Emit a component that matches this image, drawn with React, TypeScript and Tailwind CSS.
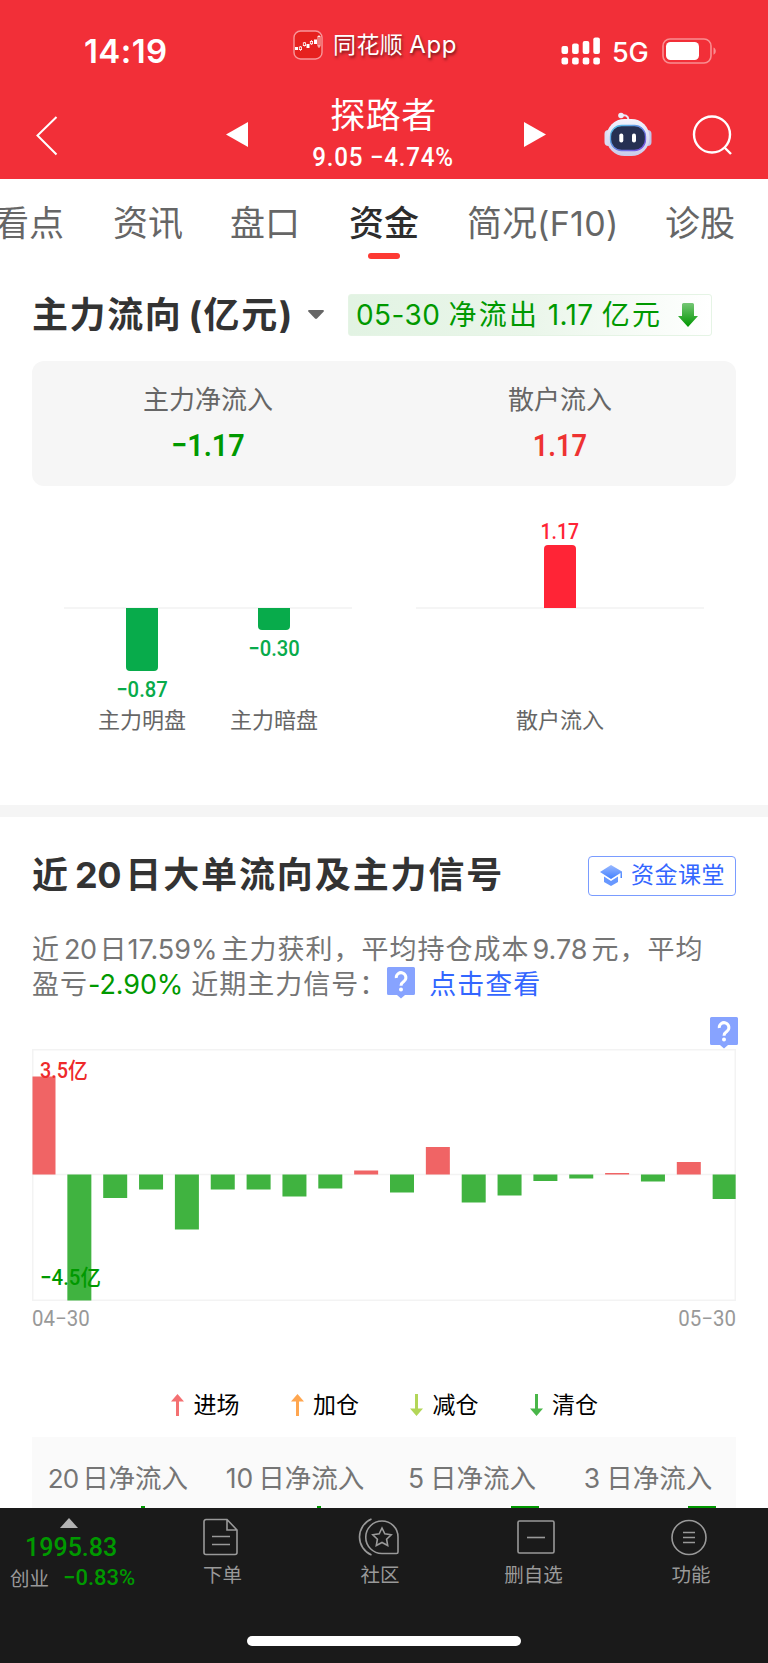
import React from "react";

const din = "font-['Roboto','Noto_Sans_CJK_SC',sans-serif]";

function QuestionBadge() {
  return (
    <svg width="28" height="32" viewBox="0 0 28 32" className="block shrink-0">
      <path d="M1.5 0h25a1.5 1.5 0 0 1 1.5 1.5v25a1.5 1.5 0 0 1-1.5 1.5H18l-4 3.4L10 28H1.5A1.5 1.5 0 0 1 0 26.500v-25A1.500 1.500 0 0 1 1.500 0z" fill="#87a3ff" />
      <path d="M9.300 11a4.800 4.800 0 1 1 7.800 3.200c-1.800 1.300-3.100 2-3.100 4.500" fill="none" stroke="#fff" strokeWidth="3" />
      <circle cx="14" cy="22.500" r="2" fill="#fff" />
    </svg>
  );
}

function StatusBar() {
  const signal = [8, 10.500, 13, 16.500];
  return (
    <div className="flex h-[90px] items-start">
      <div className="w-[293px] pl-[84px] pt-[34px] text-[33px] font-semibold leading-[34px] tracking-[0.400px]">14:19</div>
      <svg width="30" height="30" viewBox="0 0 30 30" className="mt-[30px]">
        <rect x="1" y="1" width="28" height="28" rx="6.500" fill="#e6211f" stroke="#f8979a" strokeWidth="1.400" />
        <g fill="#fff">
          <rect x="2" y="17" width="3" height="3" />
          <rect x="13.500" y="14" width="3" height="4" />
          <rect x="21" y="9.500" width="3" height="4.500" />
        </g>
        <path d="M7.500 16v5M11.500 12v4.500M18.500 10v5M26 5v13" stroke="#fff" strokeWidth=".7" />
        <g fill="#e6211f" stroke="#fff" strokeWidth=".8">
          <rect x="6.300" y="17" width="2.300" height="2.600" />
          <rect x="10.300" y="12.800" width="2.300" height="2.800" />
          <rect x="17.300" y="11.500" width="2.300" height="2.300" />
          <rect x="25" y="6.500" width="2" height="9.500" />
        </g>
      </svg>
      <div className="ml-[10px] mt-[30px] w-[228px] whitespace-nowrap text-[23px] leading-[30px] tracking-[0.4px] [text-shadow:1px_2px_3px_rgba(0,0,0,.55)]">
        同花顺<span className="ml-[6px] text-[24px] tracking-[0.700px]">App</span>
      </div>
      <svg width="40" height="28" viewBox="0 0 40 28" className="mt-[37px]" fill="#fff">
        {signal.map((h, i) => (
          <g key={i}>
            <rect x={0.5 + i * 10.600} y={17 - h} width="6.600" height={h} rx="2" />
            <rect x={0.5 + i * 10.600} y="20.500" width="6.600" height="7" rx="2" />
          </g>
        ))}
      </svg>
      <div className="ml-[11px] mt-[38px] w-[50px] text-[27px] font-medium leading-[30px] tracking-[-0.3px]">5G</div>
      <svg width="56" height="28" viewBox="0 0 56 28" className="mt-[37px]">
        <rect x="1" y="2" width="48" height="24" rx="7" fill="none" stroke="#f98e91" strokeWidth="1.600" />
        <rect x="4" y="5" width="33" height="18" rx="4.500" fill="#fff" />
        <path d="M51.500 10.500c3 1.200 3 6 0 7.200z" fill="#f98e91" />
      </svg>
    </div>
  );
}

function Robot() {
  return (
    <svg width="50" height="46" viewBox="0 0 50 46">
      <defs>
        <linearGradient id="shell" x1="0" y1="0" x2="0" y2="1">
          <stop offset="0" stopColor="#f4f4fd" />
          <stop offset="1" stopColor="#c9cbea" />
        </linearGradient>
        <linearGradient id="rim" x1="0" y1="0" x2="1" y2="1">
          <stop offset="0" stopColor="#56c9e8" />
          <stop offset="1" stopColor="#7a48e0" />
        </linearGradient>
      </defs>
      <path d="M18 4.500c4-1 7 0 7.500 4" fill="none" stroke="#e9e7f8" strokeWidth="2" />
      <circle cx="18" cy="4.500" r="2.800" fill="#eeeefa" />
      <rect x="1.500" y="19" width="8" height="16" rx="4" fill="#dcdcf2" />
      <rect x="40.500" y="19" width="8" height="16" rx="4" fill="#c4c4e8" />
      <rect x="3.500" y="8" width="43" height="37" rx="18" fill="url(#shell)" />
      <rect x="7.500" y="14.500" width="35" height="25" rx="11" fill="#263052" stroke="url(#rim)" strokeWidth="1.300" />
      <rect x="16.300" y="22.500" width="4" height="9" rx="1.900" fill="#fff" />
      <rect x="29" y="22.500" width="4" height="9" rx="1.900" fill="#fff" />
    </svg>
  );
}

function TitleBar() {
  return (
    <div className="flex h-[89px] items-start">
      <svg width="22" height="40" viewBox="0 0 22 40" className="ml-[36px] mt-[26px]">
        <path d="M20.500 1 1.500 19.500 20.500 38.500" fill="none" stroke="#fff" strokeWidth="2" />
      </svg>
      <svg width="22" height="25" viewBox="0 0 22 25" className="ml-[168px] mt-[32px]"><path d="M22 0v25L0 12.500z" fill="#fff" /></svg>
      <div className="ml-[51px] w-[169px] text-center">
        <div className="mt-[6px] text-[35px] leading-[38px] tracking-[0.500px]">探路者</div>
        <div className={`${din} mt-[9px] flex justify-center whitespace-nowrap text-[26px] font-medium leading-[28px]`}>
          <span className="scale-x-[.93] tracking-[0.800px]">9.05 −4.74%</span>
        </div>
      </div>
      <svg width="22" height="25" viewBox="0 0 22 25" className="ml-[56px] mt-[32px]"><path d="M0 0v25l22-12.500z" fill="#fff" /></svg>
      <div className="ml-[57px] mt-[21px]"><Robot /></div>
      <svg width="42" height="42" viewBox="0 0 42 42" className="ml-[39px] mt-[25px]" fill="none" stroke="#fff" strokeWidth="2.400">
        <circle cx="20" cy="19.500" r="18" />
        <path d="m32.500 32.500 6.500 6.500" />
      </svg>
    </div>
  );
}

function Tabs() {
  return (
    <nav className="flex h-[84px] items-start overflow-hidden whitespace-nowrap pt-[22px] text-[35px] leading-[44px] text-[#666]">
      <span className="-ml-[6px] w-[119px] shrink-0">看点</span>
      <span className="w-[117px] shrink-0">资讯</span>
      <span className="w-[119px] shrink-0">盘口</span>
      <span className="flex w-[118px] shrink-0 flex-col font-medium text-[#2d2d2d]">
        资金
        <span className="ml-[19px] mt-[8px] h-[6px] w-[32px] rounded-full bg-[#fd3a33]" />
      </span>
      <span className="w-[198px] shrink-0">简况<span className="text-[34px] tracking-[0.300px]">(F10)</span></span>
      <span>诊股</span>
    </nav>
  );
}

function FlowSection() {
  return (
    <section className="h-[542px] px-8">
      <div className="flex h-[98px] items-start pt-[31px]">
        <h2 className="w-[276px] whitespace-nowrap text-[36px] font-bold leading-[42px] tracking-[1.600px] text-[#333]">主力流向<span className="ml-[6px]">(亿元)</span></h2>
        <svg width="16" height="10" viewBox="0 0 16 10" className="mt-[16px]"><path d="M1 0h14q1.500.5.500 1.800L9 8.500q-1 .9-2 0L.5 1.800Q-.5.5 1 0z" fill="#666" /></svg>
        <div className="ml-[24px] flex h-[42px] w-[364px] shrink-0 items-center rounded-[3px] border border-[#e5f4e5] bg-linear-to-r from-[#e2f3e3] via-[#eaf6ea] to-white pl-[7px] text-[28px] leading-[40px] text-[#009900]">
          <span className="w-[322px] shrink-0 whitespace-nowrap tracking-[0.400px]">05-30 <span className="tracking-[2.300px]">净流出</span> 1.17 <span className="tracking-[2.300px]">亿元</span></span>
          <svg width="20" height="24" viewBox="0 0 20 24">
            <defs><linearGradient id="down" x1="0" y1="0" x2="0" y2="1"><stop stopColor="#75c675" /><stop offset="1" stopColor="#009700" /></linearGradient></defs>
            <path d="M4 1.500Q4 0 5.500 0h9Q16 0 16 1.500V13h4L10 24 0 13h4z" fill="url(#down)" />
          </svg>
        </div>
      </div>
      <div className="flex h-[125px] rounded-[12px] bg-[#f6f6f6] text-center">
        <div className="w-[352px] pt-[21px]">
          <div className="text-[26px] leading-[36px] text-[#666]">主力净流入</div>
          <div className={`${din} mt-[9px] flex justify-center text-[32px] font-semibold leading-[36px] text-[#009900]`}><span className="scale-x-[.9]">−1.17</span></div>
        </div>
        <div className="w-[352px] pt-[21px]">
          <div className="text-[26px] leading-[36px] text-[#666]">散户流入</div>
          <div className={`${din} mt-[9px] flex justify-center text-[32px] font-semibold leading-[36px] text-[#ee3232]`}><span className="scale-x-[.85]">1.17</span></div>
        </div>
      </div>
      <div className={`${din} flex px-8 pt-[34px] text-[22px] font-medium leading-[24px]`}>
        <div className="w-[288px]">
          <div className="h-[87px]" />
          <div className="flex h-[122px] gap-[2px] border-t-2 border-[#f5f5f5] pl-[13px] text-[#08ab4b]">
            <div className="-mt-px flex w-[130px] flex-col items-center">
              <div className="h-[63px] w-8 shrink-0 rounded-b-[4px] bg-[#08ab4b]" />
              <span className="mt-[7px] scale-x-[.92]">−0.87</span>
              <span className="mt-[7px] whitespace-nowrap text-[22px] font-normal text-[#666]">主力明盘</span>
            </div>
            <div className="-mt-px flex w-[130px] flex-col items-center">
              <div className="h-[22px] w-8 shrink-0 rounded-b-[4px] bg-[#08ab4b]" />
              <span className="mt-[7px] scale-x-[.92]">−0.30</span>
              <span className="mt-[48px] whitespace-nowrap text-[22px] font-normal text-[#666]">主力暗盘</span>
            </div>
          </div>
        </div>
        <div className="ml-[64px] w-[288px]">
          <div className="flex h-[89px] flex-col items-center border-b-2 border-[#f5f5f5] text-[#ff2436]">
            <span className="scale-x-[.88]">1.17</span>
            <div className="mt-[1px] h-[63px] w-8 shrink-0 rounded-t-[4px] bg-[#ff2436]" />
          </div>
          <div className="mt-[100px] text-center text-[22px] font-normal text-[#666]">散户流入</div>
        </div>
      </div>
    </section>
  );
}

const FLOWS = [98, -126, -23.500, -15, -55, -15, -15, -22, -14, 4, -18, 27.500, -28, -21, -6.500, -4, 1.500, -7, 12.500, -24.500];

function FlowChart() {
  return (
    <div className="relative h-[252px]">
      <svg width="704" height="252" viewBox="0 0 704 252" className="block">
        <rect x=".75" y=".75" width="702.500" height="250.500" fill="none" stroke="#f3f3f3" strokeWidth="1.500" />
        <path d="M0 125.500h704" stroke="#f3f3f3" strokeWidth="1.500" />
        {FLOWS.map((v, i) => {
          const x = Math.max(0.5, -0.5 + i * 35.850);
          const w = i === 0 || i === 19 ? 23 : 24;
          return <rect key={i} x={x} y={v > 0 ? 125.500 - v : 125.500} width={w} height={Math.abs(v)} fill={v > 0 ? "#f06465" : "#40b340"} />;
        })}
      </svg>
      <span className={`${din} absolute left-[8px] top-[9px] origin-left scale-x-[.9] text-[22px] font-medium leading-[26px] text-[#ee2a2a]`}>3.5亿</span>
      <span className={`${din} absolute left-[8px] top-[216px] origin-left scale-x-[.93] text-[22px] font-medium leading-[26px] text-[#009900]`}>−4.5亿</span>
    </div>
  );
}

const SIGNALS = [
  { label: "进场", color: "#f47072", up: true },
  { label: "加仓", color: "#ffa64f", up: true },
  { label: "减仓", color: "#b3d658", up: false },
  { label: "清仓", color: "#49b649", up: false },
];

const PERIODS = [
  { days: "20", text: "-ml-[4px]", digits: "mr-[4px] text-[26px] tracking-[-1px]", mark: "ml-[45px] w-[4px]" },
  { days: "10", text: "-ml-[2px]", digits: "mr-[5px]", mark: "ml-[45px] w-[4px]" },
  { days: "5", text: "", digits: "mr-[6px]", mark: "ml-[106px] w-[28px]" },
  { days: "3", text: "", digits: "mr-[6px]", mark: "ml-[108px] w-[28px]" },
];

function OrderSection() {
  return (
    <section className="h-[691px] overflow-hidden px-8">
      <div className="flex h-[107px] items-start justify-between pt-[37px]">
        <h2 className="whitespace-nowrap text-[36px] font-bold leading-[42px] tracking-[1.900px] text-[#333]">近<span className="ml-[5px] mr-[4px] tracking-[-0.3px]">20</span>日大单流向及主力信号</h2>
        <button className="mt-[2px] flex h-[40px] w-[148px] items-center rounded-[4px] border-[1.500px] border-[#7a9cff] pl-[11px] text-[23px] leading-[36px] text-[#3366ff]">
          <svg width="23" height="22" viewBox="0 0 23 22">
            <defs><linearGradient id="cap" x1="0" y1="0" x2="0" y2="1"><stop stopColor="#9ab9ff" /><stop offset="1" stopColor="#4180ff" /></linearGradient></defs>
            <path d="M11 0 22 6.500V13h-1.500V8L11 14 0 7z" fill="url(#cap)" />
            <path d="M4 11.500 11 16l7-4.500v5.500l-7 4-7-4z" fill="#6898ff" />
          </svg>
          <span className="-mt-[2px] ml-[8px] whitespace-nowrap tracking-[0.500px]">资金课堂</span>
        </button>
      </div>
      <div className="relative h-[125px] pt-[8px] text-[27px] leading-[35.500px] tracking-[1px] text-[#757575]">
        <div className="flex h-[35px] whitespace-nowrap">
          近<span className="ml-[4px] mr-[3px] tracking-[-0.5px]">20</span>日<span className="mr-[4px] tracking-[0px]">17.59%</span>主力获利，平均持仓成本<span className="ml-[3px] mr-[4px] tracking-[0px]">9.78</span>元，平均
        </div>
        <div className="flex h-[36px] whitespace-nowrap">
          盈亏<span className="tracking-[-0.100px] text-[#009900]">-2.90%</span><span className="ml-[8px] w-[196px]">近期主力信号：</span>
          <QuestionBadge />
          <span className="ml-[14px] text-[#3366ff]">点击查看</span>
        </div>
        <div className="absolute right-[-2px] top-[93px] z-10"><QuestionBadge /></div>
      </div>
      <FlowChart />
      <div className={`${din} flex h-[79px] justify-between pt-[6px] text-[22px] leading-[24px] text-[#999]`}>
        <span className="origin-left scale-x-[.93]">04−30</span>
        <span className="origin-right scale-x-[.93]">05−30</span>
      </div>
      <div className="flex h-[57px] pl-[139px] text-[23px] leading-[34px] text-black">
        {SIGNALS.map((s) => (
          <div key={s.label} className="flex w-[119.500px] items-start pt-[8px]">
            <svg width="13" height="22" viewBox="0 0 13 22" className={s.up ? "mt-[6px]" : "mt-[6px] rotate-180"}>
              <path d="M6.500 0 13 7.500H8V22H5V7.500H0z" fill={s.color} />
            </svg>
            <span className="ml-[9.500px]">{s.label}</span>
          </div>
        ))}
      </div>
      <div className="flex h-[71px] bg-[#fafafa] text-[26.500px] leading-[36px] text-[#757575]">
        {PERIODS.map((p) => (
          <div key={p.days} className="flex w-[176px] flex-col items-center">
            <div className={`h-[69px] whitespace-nowrap pt-[23px] ${p.text}`}><span className={p.digits}>{p.days}</span>日净流入</div>
            <div className={`h-[2px] shrink-0 bg-[#009900] ${p.mark}`} />
          </div>
        ))}
      </div>
    </section>
  );
}

function BottomNav() {
  return (
    <footer className="flex h-[155px] flex-col bg-[#1a1a1a] text-[#999]">
      <div className="flex h-[128px] items-start">
        <div className="w-[163px] shrink-0 pt-[10px]">
          <svg width="18" height="10" viewBox="0 0 18 10" className="ml-[60px] block"><path d="M9 0l9 10H0z" fill="#b3b3b3" /></svg>
          <div className={`${din} ml-[25px] mt-[6px] text-[25px] font-medium leading-[28px] text-[#009900]`}>1995.83</div>
          <div className="mt-[3px] flex items-start pl-[10px] text-[19.500px] leading-[28px]">
            <span className="w-[53px]">创业</span>
            <span className={`${din} text-[22px] font-medium leading-[26px] text-[#009900]`}>−0.83%</span>
          </div>
        </div>
        <div className="flex w-[119px] shrink-0 flex-col items-center pt-[10px] text-[19.500px] leading-[28px]">
          <svg width="36" height="38" viewBox="0 0 36 38" fill="none" stroke="#999" strokeWidth="1.600" className="-ml-[4px]">
            <path d="M3 1.500h21L34 12v22.500a2 2 0 0 1-2 2H3a2 2 0 0 1-2-2v-31a2 2 0 0 1 2-2zM24 1.500V12h10M9 18.500h18M9 26.500h18" />
          </svg>
          <span className="mt-[5px]">下单</span>
        </div>
        <div className="flex w-[196px] shrink-0 flex-col items-center pt-[10px] text-[19.500px] leading-[28px]">
          <svg width="42" height="38" viewBox="0 0 42 38" fill="none" stroke="#999" strokeWidth="1.600" className="-ml-[3px]">
            <path d="M24 3a16 16 0 0 1 16 16v15a1.500 1.500 0 0 1-1.500 1.500H24A16 16 0 0 1 24 3zM13.500 1a19.500 19.500 0 0 0 0 36M24 10l2.800 5.800 6.400.9-4.600 4.500 1.100 6.300-5.700-3-5.700 3 1.100-6.300-4.600-4.500 6.400-.9z" />
          </svg>
          <span className="mt-[5px]">社区</span>
        </div>
        <div className="flex w-[111px] shrink-0 flex-col items-center pt-[10px] text-[19.500px] leading-[28px]">
          <svg width="38" height="38" viewBox="0 0 38 38" fill="none" stroke="#999" strokeWidth="1.600" className="ml-[4px]">
            <rect x="1" y="3" width="36" height="32" rx="1.500" /><path d="M10 19.500h18" />
          </svg>
          <span className="mt-[5px]">删自选</span>
        </div>
        <div className="flex w-[179px] shrink-0 flex-col items-center pl-[25px] pt-[10px] text-[19.500px] leading-[28px]">
          <svg width="38" height="38" viewBox="0 0 38 38" fill="none" stroke="#999" strokeWidth="1.600" className="-ml-[4px]">
            <circle cx="19" cy="19.500" r="17" /><path d="M13 14.500h12M13 19.500h12M13 24.500h12" />
          </svg>
          <span className="mt-[5px]">功能</span>
        </div>
      </div>
      <div className="mx-auto h-[10px] w-[274px] rounded-full bg-white" />
    </footer>
  );
}

export default function App() {
  return (
    <div className="flex h-[1663px] w-[768px] flex-col overflow-hidden bg-white font-['Inter','Noto_Sans_CJK_SC',sans-serif]">
      <header className="h-[179px] bg-[#f22f38] text-white">
        <StatusBar />
        <TitleBar />
      </header>
      <Tabs />
      <FlowSection />
      <div className="h-[12px] bg-[#f5f5f5]" />
      <OrderSection />
      <BottomNav />
    </div>
  );
}
